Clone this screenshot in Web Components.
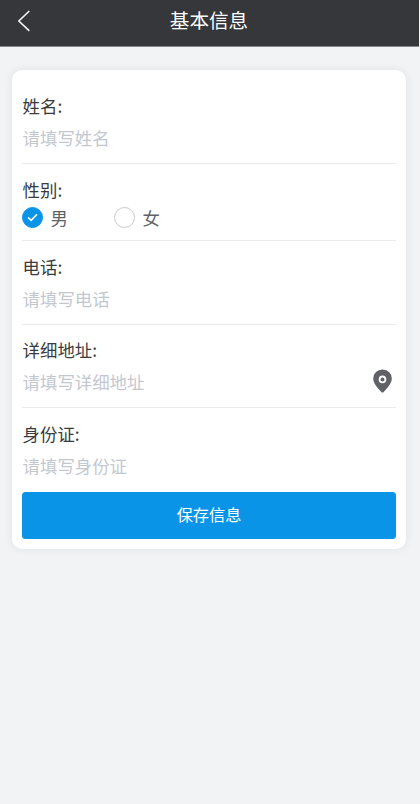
<!DOCTYPE html>
<html lang="zh-CN">
<head>
<meta charset="utf-8">
<title>基本信息</title>
<style>
html,body{margin:0;height:100%}
body{background:#f2f3f5;font-family:"Noto Sans CJK SC",sans-serif;color:#3a3b3e;overflow:hidden}
</style>
</head>
<body>
<profile-page></profile-page>
<script>
const define = (name, html) => customElements.define(name, class extends HTMLElement {
  constructor() {
    super();
    const t = document.createElement('template');
    t.innerHTML = html;
    this.attachShadow({mode: 'open'}).append(t.content.cloneNode(true));
  }
});

define('nav-bar', `<style>
:host{display:grid;grid-template-columns:48px 1fr 48px;align-items:center;width:419px;background:#36373b;border-bottom:1px solid #85868a;box-sizing:border-box;height:47px;color:#fff}
svg{display:block;margin:0 0 4px 16px}
h1{margin:0;font-size:19.6px;line-height:40px;font-weight:400;text-align:center;padding:0 1px 6px 0}
</style>
<svg width="16" height="24" viewBox="0 0 16 24" fill="none" stroke="#f4f4f4" stroke-width="1.7" stroke-linecap="round" stroke-linejoin="round"><path d="M12.8 2.5 2.8 12 12.8 21.3"/></svg>
<h1><slot></slot></h1>`);

define('form-card', `<style>
:host{display:flex;flex-direction:column;box-sizing:border-box;margin:23px 14px 0 12px;height:479px;padding:10px;background:#fff;border-radius:10px;box-shadow:0 0 8px rgba(40,60,60,.09)}
</style><slot></slot>`);

define('form-row', `<style>
:host{display:block;box-sizing:border-box;height:84px;padding-top:10px;border-bottom:1px solid #e9eaeb;font-size:17.4px;line-height:32px}
:host([short]){height:77px}
:host([tight]){height:83px;padding-top:9px}
:host([last]){border-bottom-color:transparent}
.label,.body{padding-left:.6px}
.body{display:flex;align-items:center;justify-content:space-between;height:32px;color:#c3c8d0}
:host([short]) .body{height:23px;justify-content:flex-start;padding-left:0}
</style>
<div class="label"><slot name="label"></slot></div><div class="body"><slot></slot></div>`);

define('radio-option', `<style>
:host{display:flex;align-items:center;gap:7.5px;width:92px;color:#606266}
.dot{box-sizing:border-box;width:21px;height:21px;border:1px solid #c8c9cc;border-radius:50%;display:grid;place-items:center}
svg{display:none}
:host([checked]) .dot{background:#0a94e8;border-color:#0a94e8}
:host([checked]) svg{display:block}
.text{line-height:24px;padding-top:1px}
</style>
<span class="dot"><svg width="11" height="9" viewBox="0 0 11 9" fill="none" stroke="#fff" stroke-width="1.6"><path d="M1 4.3 4.2 7.3 10 1.2"/></svg></span><span class="text"><slot></slot></span>`);

define('map-pin', `<style>:host{display:block;margin:0 3.8px 3px 0}svg{display:block}</style>
<svg width="19" height="24" viewBox="0 0 19 24"><path fill="#606266" d="M9.5.5A9.1 9.1 0 0 0 .2 9.6C.2 14.8 5 19.6 8.3 22.9Q9.5 24 10.7 22.9C14 19.6 18.8 14.8 18.8 9.6A9.1 9.1 0 0 0 9.5.5Z"/><circle cx="9.5" cy="10.4" r="2.9" fill="none" stroke="#fff" stroke-width="1.8"/></svg>`);

define('save-button', `<style>
:host{display:block}
button{display:block;width:100%;height:47px;border:0;border-radius:3.5px;background:#0a94e8;color:#fff;font:400 16.2px/45px "Noto Sans CJK SC",sans-serif;padding:0 0 2px}
</style><button type="button"><slot></slot></button>`);

define('profile-page', `<style>:host{display:block}</style>
<nav-bar>基本信息</nav-bar>
<form-card>
<form-row><span slot="label">姓名:</span><span>请填写姓名</span></form-row>
<form-row short><span slot="label">性别:</span><radio-option checked>男</radio-option><radio-option>女</radio-option></form-row>
<form-row><span slot="label">电话:</span><span>请填写电话</span></form-row>
<form-row tight><span slot="label">详细地址:</span><span>请填写详细地址</span><map-pin></map-pin></form-row>
<form-row last><span slot="label">身份证:</span><span>请填写身份证</span></form-row>
<save-button>保存信息</save-button>
</form-card>`);
</script>
</body>
</html>
